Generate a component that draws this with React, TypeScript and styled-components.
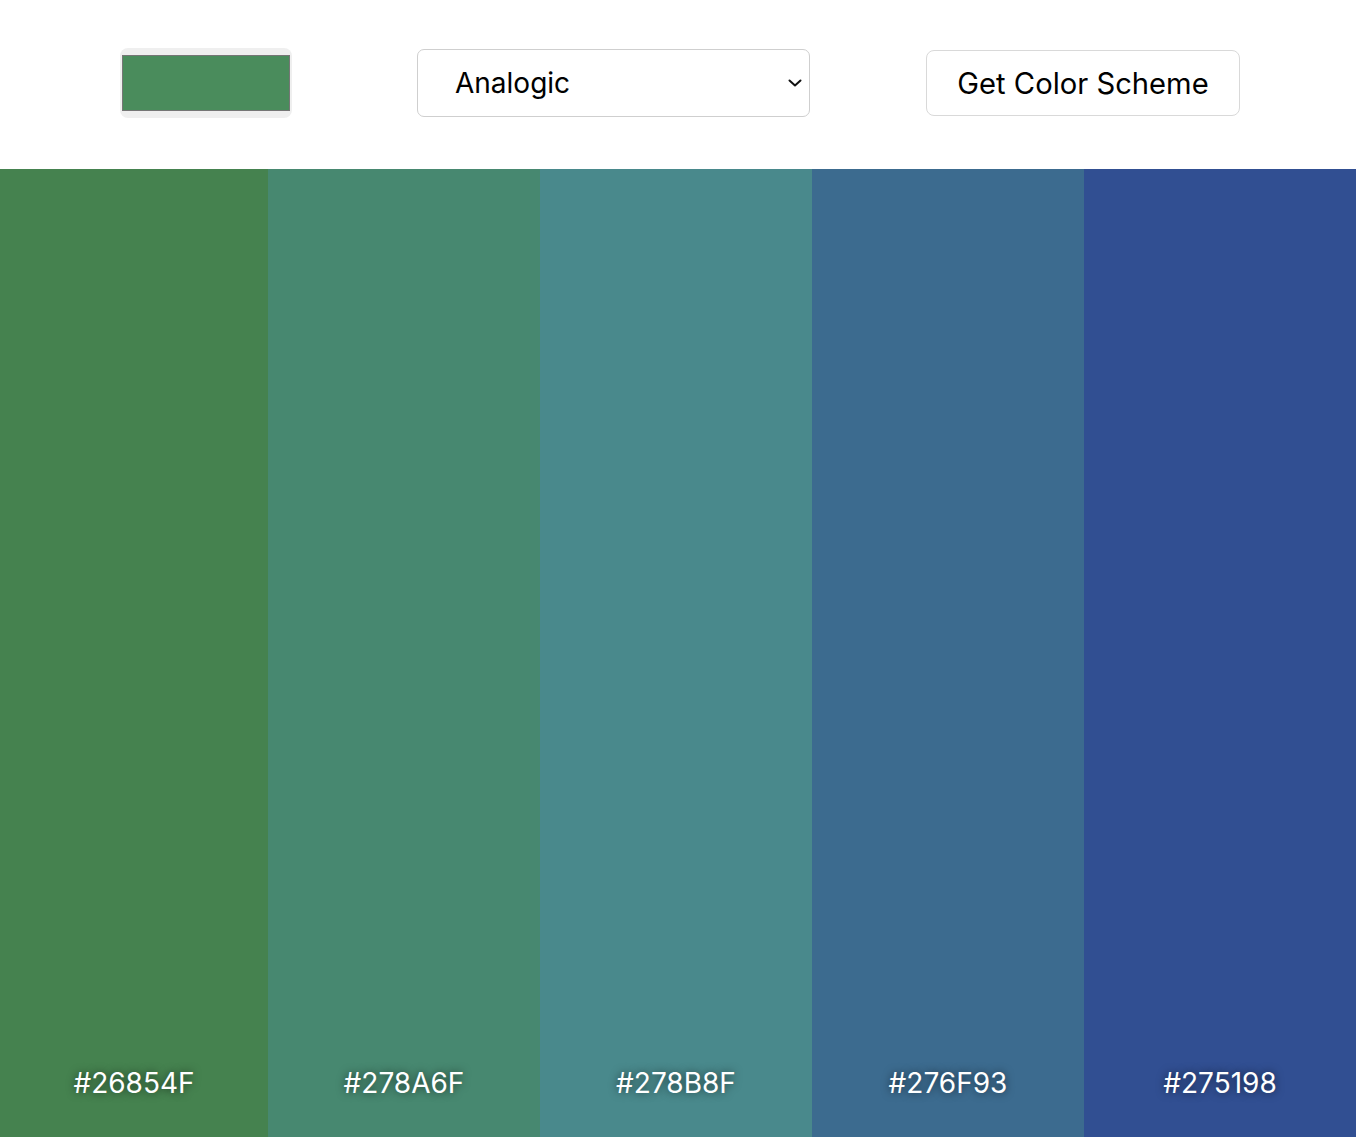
import React, { useState } from "react";
import styled, { createGlobalStyle } from "styled-components";

const Global = createGlobalStyle`
  html, body { margin: 0; padding: 0; }
  body { font-family: Inter, "Noto Sans", sans-serif; background: #fff; }
`;

const Page = styled.div`
  display: flex;
  flex-direction: column;
  height: 1137px;
`;

const Toolbar = styled.header`
  height: 169px;
  flex: none;
  display: flex;
  align-items: center;
  box-sizing: border-box;
  padding: 0 0 3px 120px;
`;

const ColorPicker = styled.input`
  width: 172px;
  height: 70px;
  box-sizing: border-box;
  margin: 0 125px 0 0;
  padding: 7px 2px;
  border: none;
  border-radius: 8px;
  background: #efefef;
  cursor: pointer;
  &::-webkit-color-swatch-wrapper { padding: 0; }
  &::-webkit-color-swatch { border: 1px solid #767676; border-radius: 0; }
`;

const SelectWrap = styled.div`
  position: relative;
  width: 393px;
  height: 68px;
  margin-right: 116px;
`;

const Select = styled.select`
  appearance: none;
  -webkit-appearance: none;
  width: 100%;
  height: 100%;
  box-sizing: border-box;
  margin: 0;
  padding: 0 40px 0 37px;
  border: 1px solid #cfcfcf;
  border-radius: 7px;
  background: #fff;
  font-family: Inter, "Noto Sans", sans-serif;
  font-size: 28px;
  color: #000;
  cursor: pointer;
`;

const Chevron = styled.svg`
  position: absolute;
  right: 8px;
  top: 50%;
  width: 14px;
  height: 8px;
  margin-top: -4px;
  pointer-events: none;
`;

const Button = styled.button`
  width: 314px;
  height: 66px;
  box-sizing: border-box;
  margin: 0;
  border: 1px solid #d9d9d9;
  border-radius: 8px;
  background: #fff;
  font-family: Inter, "Noto Sans", sans-serif;
  font-size: 29.2px;
  color: #000;
  cursor: pointer;
`;

const Palette = styled.main`
  flex: 1;
  display: grid;
  grid-template-columns: 268px repeat(4, 1fr);
`;

const Swatch = styled.div<{ $bg: string }>`
  background: ${(p) => p.$bg};
  display: flex;
  flex-direction: column;
  justify-content: flex-end;
  align-items: center;
  padding-bottom: 37px;
`;

const HexLabel = styled.span`
  color: #fff;
  font-size: 28px;
  font-weight: 400;
  text-shadow: 0 0 8px rgba(0, 0, 0, 0.6);
`;

const colors = [
  { hex: "#26854F", shown: "#45824f" },
  { hex: "#278A6F", shown: "#478870" },
  { hex: "#278B8F", shown: "#49898c" },
  { hex: "#276F93", shown: "#3c6b8f" },
  { hex: "#275198", shown: "#314f92" },
];

export default function App() {
  const [seed, setSeed] = useState("#4a8c5c");
  const [mode, setMode] = useState("analogic");
  return (
    <Page>
      <Global />
      <Toolbar>
        <ColorPicker type="color" value={seed} onChange={(e) => setSeed(e.target.value)} />
        <SelectWrap>
          <Select value={mode} onChange={(e) => setMode(e.target.value)}>
            <option value="monochrome">Monochrome</option>
            <option value="monochrome-dark">Monochrome Dark</option>
            <option value="monochrome-light">Monochrome Light</option>
            <option value="analogic">Analogic</option>
            <option value="complement">Complement</option>
            <option value="analogic-complement">Analogic Complement</option>
            <option value="triad">Triad</option>
          </Select>
          <Chevron viewBox="0 0 14 8" fill="none">
            <path d="M1.5 1.5 L7 6.5 L12.5 1.5" stroke="#111" strokeWidth="2" strokeLinecap="round" strokeLinejoin="round" />
          </Chevron>
        </SelectWrap>
        <Button type="button">Get Color Scheme</Button>
      </Toolbar>
      <Palette>
        {colors.map((c) => (
          <Swatch key={c.hex} $bg={c.shown}>
            <HexLabel>{c.hex}</HexLabel>
          </Swatch>
        ))}
      </Palette>
    </Page>
  );
}
